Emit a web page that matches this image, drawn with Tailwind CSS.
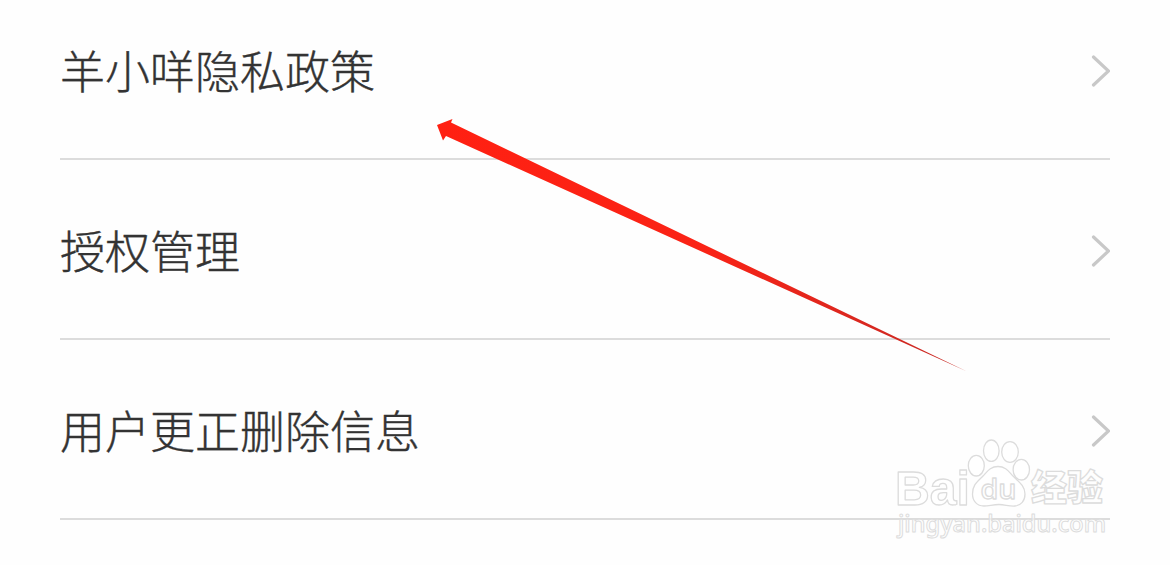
<!DOCTYPE html>
<html lang="zh-CN">
<head>
<meta charset="utf-8">
<title>隐私</title>
<script src="https://cdn.jsdelivr.net/npm/@tailwindcss/browser@4"></script>
</head>
<body class="relative h-[565px] w-[1170px] overflow-hidden bg-[#fefefe] font-['Noto_Sans_CJK_SC',sans-serif] font-light text-[#333333]">
<main class="flex h-[565px] flex-col overflow-hidden px-[60px]">
<div class="-mt-5 flex h-[180px] shrink-0 items-center justify-between border-b-2 border-[#dcdcdc] text-[45px] leading-none [-webkit-text-stroke:0.4px_#333333]"><span>羊小咩隐私政策</span>
<svg class="mt-1 h-8 w-5" viewBox="0 0 20 32" fill="none" stroke="#c8c8c8" stroke-width="3.2" stroke-linecap="round"><path d="M3.500 2 18.500 16 3.500 30"/></svg></div>
<div class="flex h-[180px] shrink-0 items-center justify-between border-b-2 border-[#dcdcdc] text-[45px] leading-none [-webkit-text-stroke:0.4px_#333333]"><span>授权管理</span>
<svg class="mt-1 h-8 w-5" viewBox="0 0 20 32" fill="none" stroke="#c8c8c8" stroke-width="3.2" stroke-linecap="round"><path d="M3.500 2 18.500 16 3.500 30"/></svg></div>
<div class="flex h-[180px] shrink-0 items-center justify-between border-b-2 border-[#dcdcdc] text-[45px] leading-none [-webkit-text-stroke:0.4px_#333333]"><span>用户更正删除信息</span>
<svg class="mt-1 h-8 w-5" viewBox="0 0 20 32" fill="none" stroke="#c8c8c8" stroke-width="3.2" stroke-linecap="round"><path d="M3.500 2 18.500 16 3.500 30"/></svg></div>
</main>
<!-- pointer arrow -->
<svg class="absolute left-0 top-0 h-[565px] w-[1170px]" viewBox="0 0 1170 565">
<defs><linearGradient id="arrow" x1="437" x2="966" y1="0" y2="0" gradientUnits="userSpaceOnUse"><stop offset="0" stop-color="#ff2012"/><stop offset=".5" stop-color="#fa2316"/><stop offset="1" stop-color="#c52a25"/></linearGradient></defs>
<path d="M437 125 452.500 119 451 122.500 967 371.500 446 136 443 140.500Z" fill="url(#arrow)"/></svg>
<!-- watermark -->
<svg class="absolute left-[885px] top-[430px] h-[120px] w-[240px]" viewBox="0 0 240 120" fill="#ffffff" fill-opacity=".6" stroke="#dcdcdc" stroke-width="1.3" stroke-linejoin="round">
<ellipse cx="91.300" cy="35.700" rx="8" ry="10.300"/><ellipse cx="106.300" cy="20.700" rx="7.800" ry="10.700"/><ellipse cx="125" cy="22" rx="8.300" ry="10.300"/><ellipse cx="136.300" cy="39.700" rx="8.200" ry="10.300"/>
<path d="M113 36.500C105 36.500 102 42 98 46C92 52 87.500 55 87.500 64C87.500 71 92 76 99 76C104 76 108 74.500 114 74.500C120 74.500 124 76.500 130 76C136 75.500 140 71 140 64C140 56 134 52 128 46C124 42 121 36.500 113 36.500Z"/>
<g class="font-['Liberation_Sans',sans-serif] font-bold"><text x="10" y="74.500" font-size="49" textLength="75" lengthAdjust="spacingAndGlyphs">Bai</text></g>
<g class="font-['Open_Sans',sans-serif] font-semibold"><text x="95.500" y="69" font-size="27" textLength="36" lengthAdjust="spacingAndGlyphs">du</text></g>
<g class="font-['Noto_Sans_CJK_SC',sans-serif] font-black"><text x="146" y="71" font-size="36">经验</text></g>
<g class="font-['Noto_Sans',sans-serif] font-medium" stroke-width="1"><text x="13" y="102" font-size="24" textLength="208" lengthAdjust="spacingAndGlyphs">jingyan.baidu.com</text></g>
</svg>
</body>
</html>
